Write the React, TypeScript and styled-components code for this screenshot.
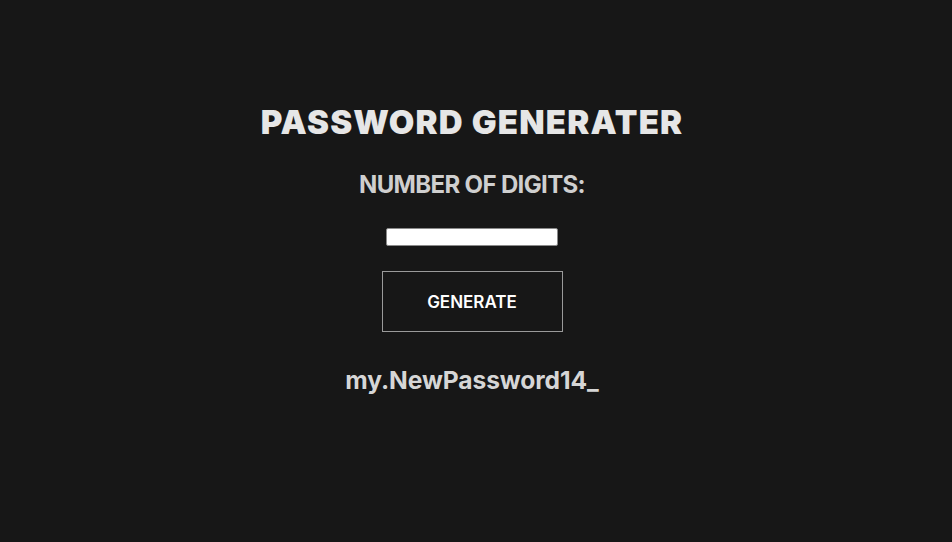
import React from "react";
import styled, { createGlobalStyle } from "styled-components";

const Global = createGlobalStyle`
  html, body { margin: 0; padding: 0; background: #171717; }
  body { font-family: "Inter", "Liberation Sans", sans-serif; }
`;

const Page = styled.main`
  width: 944px;
  height: 542px;
  background: #171717;
  display: flex;
  flex-direction: column;
  align-items: center;
  padding-top: 100px;
  box-sizing: border-box;
`;

const Title = styled.h1`
  margin: 0;
  font-family: "Inter", sans-serif;
  font-weight: 900;
  font-size: 33px;
  line-height: 44px;
  letter-spacing: 1.2px;
  color: #e6e6e6;
`;

const Label = styled.h2`
  margin: 26px 0 0;
  font-family: "Inter", sans-serif;
  font-weight: 700;
  font-size: 24px;
  line-height: 30px;
  letter-spacing: -0.65px;
  color: #cfcfcf;
`;

const DigitsInput = styled.input`
  margin-top: 28px;
  width: 172px;
  height: 18px;
  box-sizing: border-box;
  border: 1px solid #8a8a8a;
  border-radius: 2px;
  background: #ffffff;
  padding: 0;
  outline: none;
`;

const Button = styled.button`
  margin-top: 25px;
  width: 181px;
  height: 61px;
  box-sizing: border-box;
  background: transparent;
  border: 1px solid #9a9a9a;
  color: #ffffff;
  font-family: "Inter", sans-serif;
  font-weight: 600;
  font-size: 17px;
  letter-spacing: 0;
  cursor: pointer;
`;

const Result = styled.p`
  margin: 33px 0 0;
  font-family: "Inter", sans-serif;
  font-weight: 700;
  font-size: 24.6px;
  line-height: 30px;
  letter-spacing: -0.1px;
  color: #d6d6d6;
`;

export default function App() {
  return (
    <>
      <Global />
      <Page>
        <Title>PASSWORD GENERATER</Title>
        <Label>NUMBER OF DIGITS:</Label>
        <DigitsInput type="text" aria-label="number of digits" />
        <Button>GENERATE</Button>
        <Result>my.NewPassword14_</Result>
      </Page>
    </>
  );
}
